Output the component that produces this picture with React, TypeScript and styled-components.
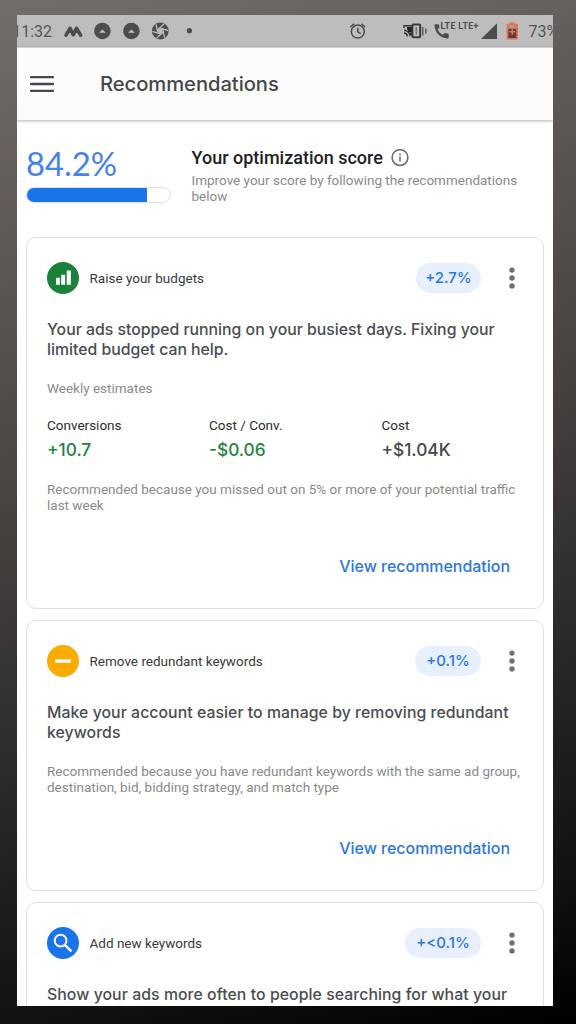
import React from 'react';
import styled, { createGlobalStyle } from 'styled-components';

const GlobalStyle = createGlobalStyle`
  * { box-sizing: border-box; }
  body { margin: 0; font-family: Roboto, 'Liberation Sans', sans-serif; }
`;

const display = `font-family: Inter, Roboto, sans-serif; font-weight: 500;`;

const Backdrop = styled.div`
  width: 576px;
  height: 1024px;
  padding: 15px 23px 18px 17px;
  background: linear-gradient(165deg, #736d6b 0%, #4b4744 40%, #2b292a 67%, #121212 87%, #000 100%);
`;

const Screen = styled.div`
  width: 536px;
  height: 991px;
  overflow: hidden;
  background: #fff;
`;

const StatusBar = styled.div`
  display: flex;
  align-items: center;
  height: 32px;
  background: #bdbdbd;
  color: #555;
  font-size: 16px;
  overflow: hidden;
`;

const Clock = styled.span`
  flex: none;
  width: 42px;
  margin-left: -7px;
  white-space: nowrap;
  text-align: right;
`;

const StatusIcons = styled.svg`
  flex: none;
  display: block;
`;

const Battery = styled.span`
  flex: none;
  margin-left: 6.5px;
  white-space: nowrap;
`;

const AppBar = styled.header`
  position: relative;
  display: flex;
  align-items: center;
  height: 73px;
  padding: 0 0 1px 13px;
  background: #fcfcfc;
  border-top: 1px solid #d2d2d2;
  box-shadow: 0 1px 3px rgba(0, 0, 0, 0.3);
`;

const AppTitle = styled.h1`
  ${display}
  margin: 0 0 0 46px;
  font-size: 20.2px;
  font-weight: 450;
  letter-spacing: -0.05px;
  color: #45484b;
`;

const ScoreSection = styled.section`
  display: flex;
  height: 117px;
  padding: 27px 0 0 9px;
`;

const ScoreColumn = styled.div`
  width: 165.5px;
`;

const ScoreValue = styled.div`
  font: 400 32.8px/34px Lato, sans-serif;
  color: #4582ea;
`;

const ScoreTrack = styled.div`
  width: 145px;
  height: 16px;
  margin-top: 6px;
  border: 1px solid #dedfe1;
  border-radius: 8px;
  overflow: hidden;
`;

const ScoreFill = styled.div`
  width: 120px;
  height: 14px;
  background: #1a73e8;
`;

const ScoreText = styled.div`
  width: 340px;
`;

const ScoreHeading = styled.h2`
  display: flex;
  align-items: center;
  gap: 8px;
  margin: 0;
  font-size: 18px;
  line-height: 21px;
  font-weight: 500;
  color: #202124;
`;

const Muted = styled.p<{ $top?: number }>`
  margin: ${p => p.$top ?? 0}px 0 0;
  font-size: 13.5px;
  line-height: 16px;
  color: #8a8a8a;
  white-space: pre-line;
`;

const CardList = styled.main`
  display: flex;
  flex-direction: column;
  gap: 11px;
  padding: 0 9px;
`;

const CardBox = styled.article<{ $height: number }>`
  height: ${p => p.$height}px;
  padding: 23px 20px 0;
  border: 1.5px solid #dfe0e1;
  border-radius: 10px;
`;

const CardHeader = styled.div`
  display: flex;
  align-items: center;
  height: 34px;
`;

const CardLabel = styled.span`
  flex: 1;
  margin-left: 10.5px;
  padding-bottom: 1px;
  font-size: 13.5px;
  color: #3a3a3a;
`;

const Pill = styled.span<{ $width: number }>`
  ${display}
  width: ${p => p.$width}px;
  height: 30px;
  border-radius: 15px;
  background: #e8f0fd;
  color: #2b78dc;
  font-size: 15px;
  line-height: 30px;
  text-align: center;
`;

const MenuDots = styled.svg`
  margin: 0 8px 0 28px;
`;

const CardTitle = styled.h3<{ $tracking?: number }>`
  ${display}
  margin: 25px 0 0;
  font-size: 15.8px;
  line-height: 20px;
  letter-spacing: ${p => p.$tracking ?? 0}px;
  color: #4a4d50;
  white-space: pre;
`;

const Metrics = styled.div`
  display: grid;
  grid-template-columns: 162px 172.5px 1fr;
  margin-top: 21px;
`;

const MetricName = styled.div`
  font-size: 13.5px;
  line-height: 16px;
  color: #2c2c2c;
`;

const MetricValue = styled.div<{ $good?: boolean }>`
  ${display}
  margin-top: 6px;
  font-size: 17.3px;
  line-height: 22px;
  color: ${p => (p.$good ? '#1e8640' : '#45484b')};
`;

const ViewLink = styled.a`
  ${display}
  display: block;
  margin: 44px 13px 0 0;
  font-size: 15.95px;
  line-height: 20px;
  text-align: right;
  color: #2b78dc;
`;

function StatusGlyphs() {
  return (
    <StatusIcons width="470" height="32" viewBox="52 15 470 32" fill="#4c4c4c">
      <path
        d="M66 35.2 70 28.3 73.2 34.6 76.6 28.3 80.6 35.2"
        fill="none"
        stroke="#4c4c4c"
        strokeWidth="3.6"
        strokeLinecap="round"
        strokeLinejoin="round"
      />
      {[102.4, 131.4].map(x => (
        <g key={x}>
          <circle cx={x} cy="31" r="8.3" />
          <path d={`M${x - 3.3} 32.8 ${x} 29.4l3.3 3.4z`} fill="#c4c4c4" />
        </g>
      ))}
      <circle cx="160.3" cy="31" r="8.4" />
      <g stroke="#bdbdbd" strokeWidth="1.3" fill="none">
        {[0, 60, 120, 180, 240, 300].map(a => (
          <path key={a} d="M157.2 30 164 24" transform={`rotate(${a} 160.3 31)`} />
        ))}
      </g>
      <circle cx="160.3" cy="31" r="2.4" fill="#bdbdbd" />
      <circle cx="189.4" cy="30.7" r="2.6" />
      <g fill="none" stroke="#4c4c4c" strokeWidth="1.5">
        <circle cx="357.8" cy="31.6" r="6.5" />
        <path d="M357.8 27.8v4.1l3 1.8M350.4 27l3.8-3.2M365.2 27l-3.8-3.2" />
      </g>
      <g fill="none" stroke="#383838" strokeWidth="1.4">
        <path d="M404 28v-2.3h8M404 30.3a6 6 0 0 1 6 6M404 33a3.6 3.6 0 0 1 3.4 3.4" />
        <path d="M407 28.4h5M408 31h5M410 34h3" strokeWidth="2.6" stroke="#222" />
        <rect x="412.4" y="24.4" width="7.8" height="12.8" rx="1" strokeWidth="2" />
        <path d="M416.3 27v7.5" strokeWidth="1.6" stroke="#777" />
        <path d="M422.8 27v8.5M425.8 28.6v5.2" stroke="#555" />
      </g>
      <path d="M435.2 24.2h3q.8 0 .9.8l.4 2.6-1.9 2.2q2 3.6 5.2 5l2-1.9 3.1.6q.8.2.8 1v3q0 .9-.8.9-11.8-.6-13.5-13.2 0-1 .8-1z" />
      <text x="440.4" y="29.2" fontFamily="Roboto, sans-serif" fontSize="8.8" fontWeight="700" textLength="38" fill="#4c4c4c">LTE LTE+</text>
      <path d="M497 23.3V39h-16z" />
      <path d="M509.8 22.2h5v1.6h2.4q.8 0 .8.8v14.2q0 .8-.8.8h-9.8q-.8 0-.8-.8V24.6q0-.8.8-.8h2.4z" fill="#e9714f" />
      <path d="M508.3 25.4h8v3.4h-8z" fill="#a99a94" />
      <path d="M508.3 28.8h8v9.2h-8z" fill="#59423b" />
      <path d="M512.3 28.8v6M509.3 31.8h6" stroke="#f0704c" strokeWidth="1.5" />
    </StatusIcons>
  );
}

function MenuIcon() {
  return (
    <svg width="24" height="18" viewBox="0 0 24 18" stroke="#45484b" strokeWidth="2.3" strokeLinecap="round">
      <path d="M1 2.2h22M1 9h22M1 15.8h22" />
    </svg>
  );
}

function InfoIcon() {
  return (
    <svg width="18" height="18" viewBox="0 0 18 18" fill="none" stroke="#6a6d70" strokeWidth="1.6">
      <circle cx="9" cy="8.6" r="7.9" />
      <path d="M9 7.6v5M9 4.5v1.7" />
    </svg>
  );
}

type Kind = 'budget' | 'remove' | 'search';

function KindIcon({ kind }: { kind: Kind }) {
  const fill = { budget: '#1b8138', remove: '#f9ab00', search: '#1a73e8' }[kind];
  return (
    <svg width="32" height="32" viewBox="0 0 32 32">
      <circle cx="16" cy="16" r="16" fill={fill} />
      {kind === 'budget' && <path d="M9 15.8h3.9v6.9H9zM14.2 12.8h3.9v9.9h-3.9zM19.7 8.6h4.2v14.1h-4.2z" fill="#fff" />}
      {kind === 'remove' && <path d="M8 14.4h16v3.3H8z" fill="#fff" />}
      {kind === 'search' && (
        <g fill="none" stroke="#fff" strokeWidth="2">
          <circle cx="13.6" cy="13.6" r="5.9" />
          <path d="m17.8 17.8 6.6 6.6" strokeWidth="2.5" />
        </g>
      )}
    </svg>
  );
}

interface CardProps {
  kind: Kind;
  label: string;
  uplift: string;
  pillWidth: number;
  height: number;
  title: string;
  tracking?: number;
  children?: React.ReactNode;
}

function Card({ kind, label, uplift, pillWidth, height, title, tracking, children }: CardProps) {
  return (
    <CardBox $height={height}>
      <CardHeader>
        <KindIcon kind={kind} />
        <CardLabel>{label}</CardLabel>
        <Pill $width={pillWidth}>{uplift}</Pill>
        <MenuDots width="6" height="22" viewBox="0 0 6 22" fill="#707070">
          <circle cx="3" cy="3.1" r="2.7" />
          <circle cx="3" cy="11" r="2.7" />
          <circle cx="3" cy="18.9" r="2.7" />
        </MenuDots>
      </CardHeader>
      <CardTitle $tracking={tracking}>{title}</CardTitle>
      {children}
    </CardBox>
  );
}

export default function App() {
  return (
    <Backdrop>
      <GlobalStyle />
      <Screen>
        <StatusBar>
          <Clock>11:32</Clock>
          <StatusGlyphs />
          <Battery>73%</Battery>
        </StatusBar>
        <AppBar>
          <MenuIcon />
          <AppTitle>Recommendations</AppTitle>
        </AppBar>
        <ScoreSection>
          <ScoreColumn>
            <ScoreValue>84.2%</ScoreValue>
            <ScoreTrack>
              <ScoreFill />
            </ScoreTrack>
          </ScoreColumn>
          <ScoreText>
            <ScoreHeading>
              Your optimization score
              <InfoIcon />
            </ScoreHeading>
            <Muted $top={4}>{'Improve your score by following the recommendations\nbelow'}</Muted>
          </ScoreText>
        </ScoreSection>
        <CardList>
          <Card
            kind="budget"
            label="Raise your budgets"
            uplift="+2.7%"
            pillWidth={65}
            height={372}
            title={'Your ads stopped running on your busiest days. Fixing your\nlimited budget can help.'}
          >
            <Muted $top={20}>Weekly estimates</Muted>
            <Metrics>
              <div>
                <MetricName>Conversions</MetricName>
                <MetricValue $good>+10.7</MetricValue>
              </div>
              <div>
                <MetricName>Cost / Conv.</MetricName>
                <MetricValue $good>-$0.06</MetricValue>
              </div>
              <div>
                <MetricName>Cost</MetricName>
                <MetricValue>+$1.04K</MetricValue>
              </div>
            </Metrics>
            <Muted $top={20}>
              {'Recommended because you missed out on 5% or more of your potential traffic\nlast week'}
            </Muted>
            <ViewLink>View recommendation</ViewLink>
          </Card>
          <Card
            kind="remove"
            label="Remove redundant keywords"
            uplift="+0.1%"
            pillWidth={66}
            height={271}
            title={'Make your account easier to manage by removing redundant\nkeywords'}
            tracking={0.06}
          >
            <Muted $top={20}>
              {'Recommended because you have redundant keywords with the same ad group,\ndestination, bid, bidding strategy, and match type'}
            </Muted>
            <ViewLink>View recommendation</ViewLink>
          </Card>
          <Card
            kind="search"
            label="Add new keywords"
            uplift="+<0.1%"
            pillWidth={76}
            height={271}
            title="Show your ads more often to people searching for what your"
            tracking={0.07}
          />
        </CardList>
      </Screen>
    </Backdrop>
  );
}
